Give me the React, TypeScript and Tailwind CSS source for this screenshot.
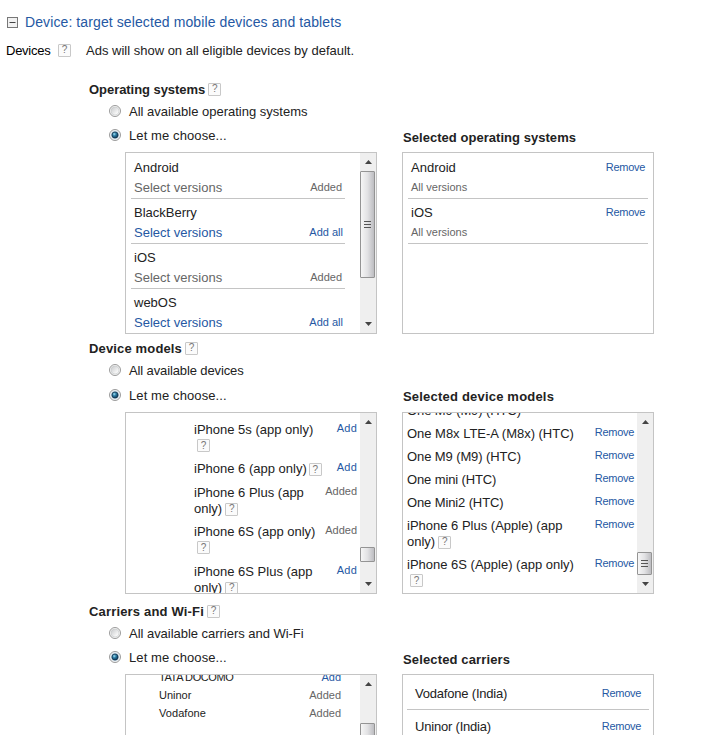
import React, { useId } from "react";
import clsx from "clsx";

function Help({ className }: { className?: string }) {
  return (
    <span
      className={clsx(
        "inline-flex h-[13px] w-[13px] shrink-0 items-center justify-center rounded-[1px] border border-[#c8c8c8] bg-[#fbfbfb] text-[10px] leading-none font-normal text-[#777]",
        className,
      )}
    >
      ?
    </span>
  );
}

function RadioIcon({ checked }: { checked?: boolean }) {
  const id = useId();
  return (
    <svg width="12" height="12" viewBox="0.5 0.5 12 12" className="shrink-0">
      <defs>
        <linearGradient id={id + "g"} x1="0" y1="0" x2="1" y2="1">
          <stop offset="0" stopColor="#c6c8ca" />
          <stop offset="0.8" stopColor="#fafafa" />
        </linearGradient>
        <radialGradient id={id + "b"} cx="0.38" cy="0.35" r="0.7">
          <stop offset="0" stopColor="#a5e0f3" />
          <stop offset="0.4" stopColor="#2b7ea6" />
          <stop offset="1" stopColor="#0b2f4f" />
        </radialGradient>
      </defs>
      <circle cx="6.5" cy="6.5" r="5.5" fill="#f8f8f8" stroke="#8e8f8f" strokeWidth="0.9" />
      {checked ? (
        <>
          <circle cx="6.5" cy="6.5" r="4.4" fill="#cfdde8" />
          <circle cx="6.5" cy="6.5" r="3.1" fill={`url(#${id}b)`} stroke="#12334e" strokeWidth="0.8" />
        </>
      ) : (
        <circle cx="6.5" cy="6.5" r="4" fill={`url(#${id}g)`} stroke="#c4c8ca" strokeWidth="0.6" />
      )}
    </svg>
  );
}

function Arrow({ down }: { down?: boolean }) {
  return (
    <svg width="7" height="4" viewBox="0 0 7 4" className={clsx("shrink-0", down && "rotate-180")}>
      <path d="M3.5 0L7 4H0Z" fill="#444" />
    </svg>
  );
}

function Scrollbar({ spacer, thumb, grip }: { spacer: string; thumb: string; grip?: boolean }) {
  return (
    <div className="flex w-[16px] shrink-0 flex-col bg-[#efefef] pr-px">
      <div className="flex h-[18px] shrink-0 items-center justify-center pl-px">
        <Arrow />
      </div>
      <div className={clsx("shrink-0", spacer)} />
      <div
        className={clsx(
          "flex shrink-0 flex-col items-center justify-center gap-[2px] rounded-[1px] border border-[#949494] bg-linear-to-r from-[#f6f6f6] via-[#e2e2e4] to-[#bdbdc1]",
          thumb,
        )}
      >
        {grip && [0, 1, 2].map((i) => <div key={i} className="h-px w-[7px] bg-[#555]" />)}
      </div>
      <div className="flex-1" />
      <div className="flex h-[18px] shrink-0 items-center justify-center pl-px">
        <Arrow down />
      </div>
    </div>
  );
}

function Box({ children, bar }: { children: React.ReactNode; bar?: React.ReactNode }) {
  return (
    <div className="flex h-[182px] w-[252px] shrink-0 overflow-hidden border border-[#c4c4c4] bg-white">
      <div className="min-w-0 flex-1">{children}</div>
      {bar}
    </div>
  );
}

type SectionProps = {
  title: string;
  all: string;
  selected: string;
  className: string;
  gap: string;
  titleClass?: string;
  allClass?: string;
  selectedClass?: string;
  children: React.ReactNode;
};

function Section({ title, all, selected, className, gap, titleClass, allClass, selectedClass, children }: SectionProps) {
  return (
    <section className={clsx("ml-[89px]", className)}>
      <h2 className="flex h-5 items-center font-bold">
        <span className={clsx("pt-[2px]", titleClass)}>{title}</span>
        <Help className="ml-[3px]" />
      </h2>
      <div className="flex">
        <div className="ml-5 w-[294px]">
          <label className="mt-px flex h-[22px] items-center gap-2">
            <RadioIcon />
            <span className={clsx("pt-[2px]", allClass)}>{all}</span>
          </label>
          <label className={clsx("flex h-[22px] items-center gap-2", gap)}>
            <RadioIcon checked />
            <span className="pt-[2px] tracking-[0.1px]">Let me choose...</span>
          </label>
        </div>
        <h3 className="flex h-5 items-center self-end font-bold">
          <span className={selectedClass}>{selected}</span>
        </h3>
      </div>
      <div className="mt-[6px] ml-9 flex gap-[25px]">{children}</div>
    </section>
  );
}

const link = "text-[#2558a3]";
const muted = "text-[#666]";

function Remove({ className }: { className?: string }) {
  return <span className={clsx("text-[11px] tracking-[-0.3px]", link, className)}>Remove</span>;
}

const systems = [
  { name: "Android", added: true },
  { name: "BlackBerry", added: false },
  { name: "iOS", added: true },
  { name: "webOS", added: false },
];

const phones = [
  { a: "iPhone 5s (app only)", b: "", inline: false, added: false, h: "h-[39px]" },
  { a: "iPhone 6 (app only)", b: "", inline: true, added: false, h: "h-[24px]" },
  { a: "iPhone 6 Plus (app", b: "only)", inline: false, added: true, h: "h-[39px]" },
  { a: "iPhone 6S (app only)", b: "", inline: false, added: true, h: "h-[40px]" },
  { a: "iPhone 6S Plus (app", b: "only)", inline: false, added: false, h: "h-[39px]" },
];

const selectedPhones = [
  { a: "One M9 (M9) (HTC)", h: "h-[23px]", t: "tracking-[-0.1px]", hideAction: true },
  { a: "One M8x LTE-A (M8x) (HTC)", h: "h-[23px]", t: "tracking-[-0.02px]" },
  { a: "One M9 (M9) (HTC)", h: "h-[23px]", t: "tracking-[-0.1px]" },
  { a: "One mini (HTC)", h: "h-[23px]", t: "tracking-[-0.12px]" },
  { a: "One Mini2 (HTC)", h: "h-[23px]", t: "tracking-[-0.12px]" },
  { a: "iPhone 6 Plus (Apple) (app", b: "only)", help: true, h: "h-[39px]" },
  { a: "iPhone 6S (Apple) (app only)", b: "", help: true, h: "h-[39px]" },
];

const carriers = [
  { name: "TATA DOCOMO", added: false, t: "tracking-[-0.4px]" },
  { name: "Uninor", added: true, t: "" },
  { name: "Vodafone", added: true, t: "tracking-[0.06px]" },
];

export default function App() {
  return (
    <main className="h-[735px] w-[701px] overflow-hidden bg-white pt-3 font-['Liberation_Sans',Arial,sans-serif] text-[13px] leading-5 whitespace-nowrap text-[#222]">
      <header className="flex h-5 items-center pl-[7px]">
        <svg width="11" height="11" viewBox="0 0 11 11" className="shrink-0">
          <rect x="0.5" y="0.5" width="10" height="10" fill="#f1f1f1" stroke="#777" />
          <path d="M2.5 5.5H8.5" stroke="#444" />
        </svg>
        <h1 className={clsx("ml-[7px] text-[14px] tracking-[0.1px]", link)}>
          Device: target selected mobile devices and tablets
        </h1>
      </header>
      <div className="mt-2 flex h-5 items-center pl-[6px]">
        <span className="w-[52px] pt-[2px] tracking-[-0.25px] text-black">Devices</span>
        <Help />
        <span className="ml-[15px] pt-[2px]">Ads will show on all eligible devices by default.</span>
      </div>

      <Section
        title="Operating systems"
        all="All available operating systems"
        selected="Selected operating systems"
        className="mt-[19px]"
        gap="mt-[2px]"
        titleClass="tracking-[-0.05px]"
        selectedClass="pt-1 tracking-[0.04px]"
      >
        <Box bar={<Scrollbar spacer="h-0" thumb="h-[107px]" grip />}>
          <div className="w-[219px] pt-px pl-[5px]">
            {systems.map((s, i) => (
              <div key={s.name} className={clsx("h-[45px] pt-1 pl-[3px]", i < 3 && "border-b border-[#c4c4c4]")}>
                <div>{s.name}</div>
                <div className={clsx("flex justify-between", s.added ? "pr-[3px]" : "pr-[2px]")}>
                  <span className={s.added ? muted : link}>Select versions</span>
                  <span className={clsx("-mt-px text-[11px]", s.added ? muted : link)}>
                    {s.added ? "Added" : "Add all"}
                  </span>
                </div>
              </div>
            ))}
          </div>
        </Box>
        <Box>
          <div className="w-[245px] pt-px pl-[5px]">
            {["Android", "iOS"].map((name) => (
              <div key={name} className="h-[45px] border-b border-[#c4c4c4] pt-1 pl-[3px]">
                <div className="flex justify-between pr-[3px]">
                  <span>{name}</span>
                  <Remove className="-mt-px" />
                </div>
                <div className={clsx("-mt-px text-[11px]", muted)}>All versions</div>
              </div>
            ))}
          </div>
        </Box>
      </Section>

      <Section
        title="Device models"
        all="All available devices"
        selected="Selected device models"
        className="mt-[4px]"
        gap="mt-[3px]"
        titleClass="tracking-[0.15px]"
        allClass="tracking-[-0.12px]"
        selectedClass="pt-[2px] tracking-[0.2px]"
      >
        <Box bar={<Scrollbar spacer="h-[116px]" thumb="h-[15px]" />}>
          <div className="pt-[9px] pr-[3px] pl-[68px] leading-4">
            {phones.map((p) => (
              <div key={p.a} className={clsx("flex justify-between", p.h)}>
                <div>
                  <div className="flex items-center">
                    {p.a}
                    {p.inline && <Help className="mt-px ml-[2px]" />}
                  </div>
                  {!p.inline && (
                    <div className={clsx("flex items-center", !p.b && "mt-px")}>
                      {p.b}
                      <Help className="ml-[3px]" />
                    </div>
                  )}
                </div>
                <span className={clsx("-mt-[2px] text-[11px]", p.added ? muted : [link, "tracking-[0.2px]"])}>
                  {p.added ? "Added" : "Add"}
                </span>
              </div>
            ))}
          </div>
        </Box>
        <Box bar={<Scrollbar spacer="h-[121px]" thumb="h-[23px]" grip />}>
          <div className="-mt-[10px] pr-[3px] pl-1 leading-4">
            {selectedPhones.map((p, i) => (
              <div key={i} className={clsx("flex justify-between", p.h)}>
                <div>
                  <div className={p.t}>{p.a}</div>
                  {p.help && (
                    <div className={clsx("flex items-center", !p.b && "mt-px")}>
                      {p.b}
                      <Help className="ml-[3px]" />
                    </div>
                  )}
                </div>
                {!p.hideAction && <Remove className="-mt-[2px]" />}
              </div>
            ))}
          </div>
        </Box>
      </Section>

      <Section
        title="Carriers and Wi-Fi"
        all="All available carriers and Wi-Fi"
        selected="Selected carriers"
        className="mt-[7px]"
        gap="mt-[2px]"
        titleClass="tracking-[0.17px]"
        allClass="tracking-[-0.03px]"
        selectedClass="pt-1 tracking-[0.14px]"
      >
        <Box bar={<Scrollbar spacer="h-[30px]" thumb="h-[40px]" grip />}>
          <div className="-mt-[7px] pr-[19px] pl-[33px] text-[11px] leading-[18px]">
            {carriers.map((c) => (
              <div key={c.name} className="flex justify-between">
                <span className={c.t}>{c.name}</span>
                <span className={c.added ? muted : link}>{c.added ? "Added" : "Add"}</span>
              </div>
            ))}
          </div>
        </Box>
        <Box>
          <div className="w-[246px] pt-[2px] pl-1">
            {["Vodafone (India)", "Uninor (India)"].map((name) => (
              <div key={name} className="flex h-[33px] items-center justify-between border-b border-[#c4c4c4] pr-2 pl-2">
                <span className="pt-[2px] tracking-[-0.2px]">{name}</span>
                <Remove />
              </div>
            ))}
          </div>
        </Box>
      </Section>
    </main>
  );
}
